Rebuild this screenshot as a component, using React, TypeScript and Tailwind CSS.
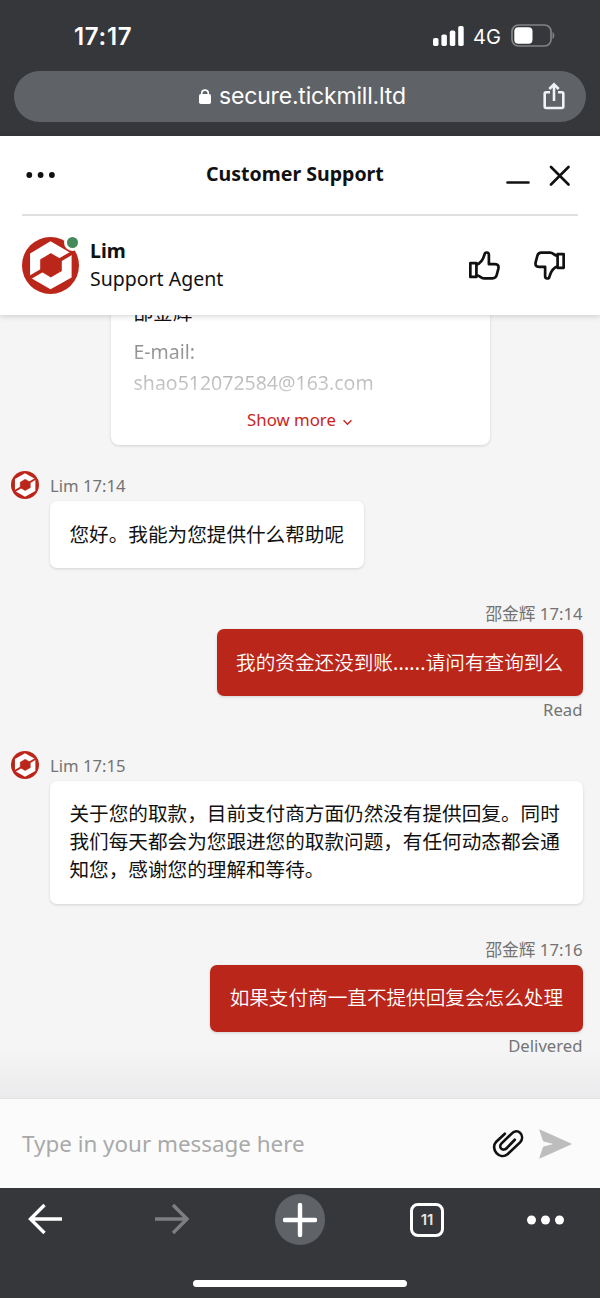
import React from "react";

const FONT = "font-['Noto_Sans','Noto_Sans_CJK_SC',sans-serif]";
const SYSTEM_FONT = "font-['Inter',sans-serif]";

type Message = {
  author: string;
  time: string;
  lines: React.ReactNode[];
  own?: boolean;
  status?: string;
};

const messages: Message[] = [
  { author: "Lim", time: "17:14", lines: ["您好。我能为您提供什么帮助呢"] },
  {
    author: "邵金辉",
    time: "17:14",
    lines: [
      <>
        我的资金还没到账<span className="font-normal tracking-[0.2px]">......</span>请问有查询到么
      </>,
    ],
    own: true,
    status: "Read",
  },
  {
    author: "Lim",
    time: "17:15",
    lines: [
      "关于您的取款，目前支付商方面仍然没有提供回复。同时",
      "我们每天都会为您跟进您的取款问题，有任何动态都会通",
      "知您，感谢您的理解和等待。",
    ],
  },
  { author: "邵金辉", time: "17:16", lines: ["如果支付商一直不提供回复会怎么处理"], own: true, status: "Delivered" },
];

function Logo({ className }: { className: string }) {
  return (
    <svg viewBox="0 0 170 170" className={className}>
      <circle cx="85" cy="85" r="85" fill="#bb261a" />
      <path d="M85 13 148 49V121L85 156 24 121V49Z" fill="#fff" />
      <path d="M22 122 150 47" stroke="#bb261a" strokeWidth="11" />
      <path d="M86 50 117 68V101L86 119 56 101V68Z" fill="#bb261a" stroke="#bb261a" strokeWidth="3" strokeLinejoin="round" />
    </svg>
  );
}

function Thumb({ className }: { className?: string }) {
  return (
    <svg viewBox="28 31 92 86" className={`h-[29px] w-[31px] ${className ?? ""}`} fill="none" stroke="#111" strokeWidth="8" strokeLinejoin="round">
      <path d="M32 67H50V108H32Z" />
      <path d="M50 72C62 68 70 56 74 42 75 33 87 33 87 43V70H105C114 70 117 75 115 84L110 103C108 110 105 112 98 112H72C62 112 61 103 50 103" />
    </svg>
  );
}

function BrowserTop() {
  return (
    <div className={`h-[136px] shrink-0 bg-[#36373b] text-white ${SYSTEM_FONT}`}>
      <div className="flex h-[71px] items-center pl-[74px] pr-[45px]">
        <span className="mt-[2px] text-[24px] font-semibold leading-none tracking-[0.7px]">17:17</span>
        <svg viewBox="0 0 31 20" className="ml-auto h-5 w-[31px]" fill="#fff">
          <rect x="0" y="12" width="5.5" height="8" rx="1.7" />
          <rect x="8.4" y="8.5" width="5.5" height="11.5" rx="1.7" />
          <rect x="16.8" y="4.5" width="5.5" height="15.5" rx="1.7" />
          <rect x="25.2" y="0" width="5.5" height="20" rx="1.7" />
        </svg>
        <span className="ml-[9px] mt-[2px] w-[28px] text-[20px] leading-none">4G</span>
        <svg viewBox="0 0 44 23" className="ml-[10px] h-[23px] w-11">
          <rect x="1" y="1" width="39" height="21" rx="6.5" fill="none" stroke="#818286" strokeWidth="1.7" />
          <rect x="3.3" y="3.3" width="18.2" height="16.4" rx="4" fill="#fff" />
          <path d="M41.5 8C44 9 44 14 41.5 15Z" fill="#818286" />
        </svg>
      </div>
      <div className="mx-[14px] flex h-[51px] items-center rounded-full bg-[#5f6266] pr-[21px]">
        <div className="flex items-center pl-[185px]">
          <svg viewBox="0 0 12 15" className="h-[15px] w-3">
            <rect x="0" y="5" width="12" height="10" rx="1.8" fill="#fff" />
            <path d="M2.7 6V4.4a3.3 3.3 0 0 1 6.6 0V6" fill="none" stroke="#fff" strokeWidth="1.6" />
          </svg>
          <span className="ml-[8px] whitespace-nowrap text-[23px] leading-none tracking-[-0.18px]">secure.tickmill.ltd</span>
        </div>
        <svg viewBox="0 0 22 28" className="-mt-[2px] ml-auto h-[28px] w-[22px]" fill="none" stroke="#f1f2f8" strokeWidth="2.6">
          <path d="M7 10.3H3.2a1.5 1.5 0 0 0-1.5 1.5V24.5a1.5 1.5 0 0 0 1.5 1.5H18.8a1.5 1.5 0 0 0 1.5-1.5V11.8a1.5 1.5 0 0 0-1.5-1.5H15" />
          <path d="M11 19V2.5M6.3 7 11 2.3 15.7 7" />
        </svg>
      </div>
    </div>
  );
}

function ChatHeader() {
  return (
    <header className="relative z-10 h-[179px] shrink-0 bg-white px-[22px] text-[#111] shadow-[0_1px_6px_rgba(0,0,0,0.18)]">
      <div className="flex h-[80px] items-center border-b-2 border-[#e0e0e0]">
        <svg viewBox="0 0 30 6" className="ml-1 h-1.5 w-[30px]" fill="#111">
          <circle cx="3.3" cy="3" r="2.9" />
          <circle cx="14.6" cy="3" r="2.9" />
          <circle cx="25.9" cy="3" r="2.9" />
        </svg>
        <h1 className="-mt-[2px] ml-[150px] w-[180px] whitespace-nowrap text-[19.55px] font-bold">Customer Support</h1>
        <svg viewBox="0 0 64 24" className="ml-[119.5px] mt-[1px] h-6 w-16" fill="none" stroke="#111" strokeWidth="2.6" strokeLinecap="round">
          <path d="M1.5 18.5H22.5M45 3 62.5 20.5M62.5 3 45 20.5" />
        </svg>
      </div>
      <div className="flex h-[98px] items-center">
        <div className="relative h-[57px] w-[57px]">
          <Logo className="h-[57px] w-[57px]" />
          <span className="absolute -top-[3px] left-[42px] h-[17px] w-[17px] rounded-full border-[3px] border-white bg-[#458a5b]" />
        </div>
        <div className="ml-[11px] text-[19.5px] leading-[28px]">
          <div className="font-bold">Lim</div>
          <div>Support Agent</div>
        </div>
        <Thumb className="ml-auto" />
        <Thumb className="ml-[34px] mr-[13px] rotate-180" />
      </div>
    </header>
  );
}

function ContactCard() {
  return (
    <div className="mx-auto -mt-[40px] h-[170px] w-[379px] shrink-0 rounded-[8px] bg-white px-[23px] pt-[24px] shadow-[0_1px_3px_rgba(0,0,0,0.14)]">
      <div className="text-[19.6px] leading-[28px] text-[#111]">邵金辉</div>
      <div className="mt-[9px] bg-gradient-to-b from-[#8e8e8e] from-20% to-[#d2d2d2] to-95% bg-clip-text text-[19.5px] leading-[31px] text-transparent">
        <div>E-mail:</div>
        <div>shao512072584@163.com</div>
      </div>
      <div className="mt-[8px] flex items-center justify-center text-[16.8px] leading-[28px] text-[#c9251b]">
        Show more
        <svg viewBox="0 0 12 8" className="ml-[6px] mt-[4px] h-[7px] w-[11px]" fill="none" stroke="#c9251b" strokeWidth="1.6">
          <path d="M1.5 1.5 6 6 10.5 1.5" />
        </svg>
      </div>
    </div>
  );
}

function MessageRow({ message }: { message: Message }) {
  const { author, time, lines, own, status } = message;
  return (
    <div className={`flex shrink-0 flex-col ${own ? "mt-[31px] items-end" : "mt-[26px] items-start"}`}>
      <div className="flex h-[30px] items-center text-[16.7px] text-[#737373]">
        {!own && <Logo className="-ml-[39px] -mt-[2px] mr-[11px] h-7 w-7" />}
        <span>
          {author} {time}
        </span>
      </div>
      <div
        className={`rounded-[7px] py-[19.5px] pl-[19.5px] text-[19.63px] leading-[28px] shadow-[0_1px_3px_rgba(0,0,0,0.14)] ${
          own ? "bg-[#bb261a] pr-[19.5px] font-[350] text-white" : "bg-white text-[#111]"
        } ${lines.length > 1 ? "w-full" : "pr-[19.5px]"}`}
      >
        {lines.map((line, i) => (
          <div key={i} className="whitespace-nowrap">
            {line}
          </div>
        ))}
      </div>
      {status && <div className="h-[28.5px] text-[16.7px] leading-[28px] text-[#737373]">{status}</div>}
    </div>
  );
}

function MessageInput() {
  return (
    <div className="flex h-[90px] shrink-0 items-center border-t border-[#e2e2e2] bg-[#fbfbfb] pl-[22px] pr-[28px]">
      <span className="text-[22.4px] text-[#a9a9a9]">Type in your message here</span>
      <svg viewBox="22 28 97 90" className="ml-auto h-[30px] w-[32px]" fill="none" stroke="#111" strokeWidth="8" strokeLinecap="round">
        <path d="M61 42 35 66C15 88 45 124 70 103L107 68C125 48 99 20 80 43L51 71C40 82 54 98 67 85L91 60" />
      </svg>
      <svg viewBox="0 0 98 90" className="ml-[15px] h-[30px] w-[33px]" fill="#bdbdbd" stroke="#bdbdbd" strokeWidth="3" strokeLinejoin="round">
        <path d="M2 3 96 45 2 87 13 54 49 45 13 36Z" />
      </svg>
    </div>
  );
}

function BrowserBottom() {
  return (
    <div className={`flex h-[110px] shrink-0 flex-col bg-[#36373b] ${SYSTEM_FONT}`}>
      <div className="flex h-[63px] items-center pl-[28px] pr-[35px]">
        <svg viewBox="0 0 35 32" className="-mt-[2px] h-8 w-[35px]" fill="none" stroke="#fff" strokeWidth="3.4">
          <path d="M34 16H2.5M16.5 2 2.5 16 16.5 30" />
        </svg>
        <svg viewBox="0 0 35 32" className="-mt-[2px] ml-[92px] h-8 w-[35px]" fill="none" stroke="#7d7e80" strokeWidth="3.4">
          <path d="M0 16H32M18 2 32 16 18 30" />
        </svg>
        <div className="ml-[85px] flex h-[51px] w-[50px] items-center justify-center rounded-full bg-[#5f6266]">
          <svg viewBox="0 0 34 34" className="h-[34px] w-[34px]" stroke="#fff" strokeWidth="4.4" strokeLinecap="round">
            <path d="M17 2V32M2 17H32" />
          </svg>
        </div>
        <div className="ml-[85px] flex h-[34px] w-[34px] items-center justify-center rounded-[8px] border-[3px] border-white text-[15px] font-semibold leading-none text-[#e4e4e6]">
          11
        </div>
        <svg viewBox="0 0 38 10" className="ml-auto h-2.5 w-[38px]" fill="#fff">
          <circle cx="4.5" cy="5" r="4.5" />
          <circle cx="18.5" cy="5" r="4.5" />
          <circle cx="32.5" cy="5" r="4.5" />
        </svg>
      </div>
      <div className="mx-auto mt-[29px] h-[7px] w-[214px] rounded-full bg-white" />
    </div>
  );
}

export default function App() {
  return (
    <main className={`flex h-[1298px] w-[600px] flex-col overflow-hidden bg-[#f5f5f5] ${FONT}`}>
      <BrowserTop />
      <ChatHeader />
      <section className="relative flex min-h-0 flex-1 flex-col overflow-hidden pl-[50px] pr-[17.5px]">
        <div className="absolute inset-x-0 bottom-0 h-[50px] bg-gradient-to-b from-transparent to-[#ebebed]" />
        <div className="-ml-[50px] -mr-[17.5px] flex shrink-0">
          <ContactCard />
        </div>
        {messages.map((message) => (
          <MessageRow key={message.author + message.time} message={message} />
        ))}
      </section>
      <MessageInput />
      <BrowserBottom />
    </main>
  );
}
